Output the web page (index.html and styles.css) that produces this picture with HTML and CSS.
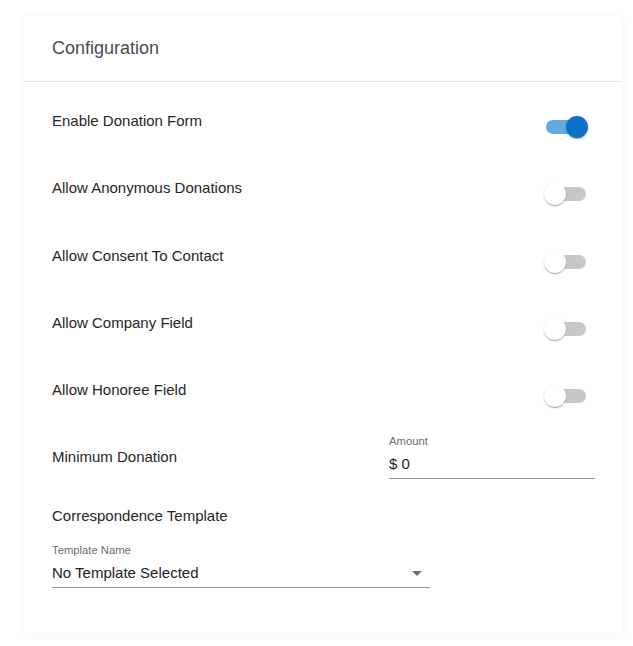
FILE: index.html
```html
<!DOCTYPE html>
<html lang="en">
<head>
<meta charset="utf-8">
<title>Configuration</title>
<link rel="stylesheet" href="styles.css">
</head>
<body>
<div class="card">
  <div class="card-header">Configuration</div>
  <div class="card-body">
    <div class="switch-row">
      <span class="row-label">Enable Donation Form</span>
      <span class="switch on"><span class="track"></span><span class="thumb"></span></span>
    </div>
    <div class="switch-row">
      <span class="row-label">Allow Anonymous Donations</span>
      <span class="switch"><span class="track"></span><span class="thumb"></span></span>
    </div>
    <div class="switch-row">
      <span class="row-label">Allow Consent To Contact</span>
      <span class="switch"><span class="track"></span><span class="thumb"></span></span>
    </div>
    <div class="switch-row">
      <span class="row-label">Allow Company Field</span>
      <span class="switch"><span class="track"></span><span class="thumb"></span></span>
    </div>
    <div class="switch-row last">
      <span class="row-label">Allow Honoree Field</span>
      <span class="switch"><span class="track"></span><span class="thumb"></span></span>
    </div>
    <div class="amount-row">
      <span class="row-label">Minimum Donation</span>
      <div class="field amount-field">
        <div class="field-label">Amount</div>
        <div class="field-input">$ 0</div>
      </div>
    </div>
    <div class="section-label">Correspondence Template</div>
    <div class="field select-field">
      <div class="field-label">Template Name</div>
      <div class="field-input select-input">
        <span>No Template Selected</span>
        <svg class="arrow" width="24" height="24" viewBox="0 0 24 24"><path d="M7 10l5 5 5-5z"/></svg>
      </div>
    </div>
  </div>
</div>
</body>
</html>
```
FILE: styles.css
```css
* { box-sizing: border-box; }
html, body { margin: 0; padding: 0; background: #ffffff; }
body {
  font-family: "Liberation Sans", Arial, sans-serif;
  color: #262626;
}
.card {
  margin: 16px 11px 13px 24px;
  background: #fff;
  box-shadow: 0 1px 10px rgba(0, 0, 0, 0.045);
}
.card-header {
  padding: 20px 28px 21px;
  font-size: 18px;
  line-height: 24px;
  color: #4b4b57;
  border-bottom: 1px solid #e6e6e6;
}
.card-body {
  padding: 29px 27px 45px 28px;
}
.row-label {
  font-size: 15px;
  line-height: 20px;
  color: #262626;
}
.switch-row {
  display: flex;
  justify-content: space-between;
  align-items: flex-start;
  height: 32px;
  margin-bottom: 35.25px;
}
.switch-row.last { margin-bottom: 22px; }
.switch {
  position: relative;
  display: block;
  width: 52px;
  height: 32px;
}
.track {
  position: absolute;
  left: 3px;
  top: 9px;
  width: 40px;
  height: 14px;
  border-radius: 7px;
  background: #c8c8c8;
}
.thumb {
  position: absolute;
  left: 1px;
  top: 5px;
  width: 22px;
  height: 22px;
  border-radius: 50%;
  background: #fff;
  box-shadow: 0 2px 1px -1px rgba(0,0,0,0.2), 0 1px 1px 0 rgba(0,0,0,0.14), 0 1px 3px 0 rgba(0,0,0,0.12);
}
.switch.on .track { background: #64a8e0; }
.switch.on .thumb { left: 23px; background: #0a72cb; }
.amount-row {
  display: flex;
  justify-content: space-between;
  align-items: center;
}
.field-label {
  font-size: 11.25px;
  line-height: 14px;
  color: #6b6b6b;
}
.field-input {
  margin-top: 6px;
  font-size: 15px;
  line-height: 20px;
  padding-bottom: 4px;
  color: #222;
  border-bottom: 1px solid #949494;
}
.amount-field { width: 206px; }
.section-label {
  margin-top: 27px;
  font-size: 15px;
  line-height: 20px;
  color: #262626;
}
.select-field {
  margin-top: 17px;
  width: 378px;
}
.select-input {
  display: flex;
  justify-content: space-between;
  align-items: center;
}
.arrow {
  fill: #707070;
  margin-right: 1px;
  margin-top: -4px;
  margin-bottom: -4px;
}
```
